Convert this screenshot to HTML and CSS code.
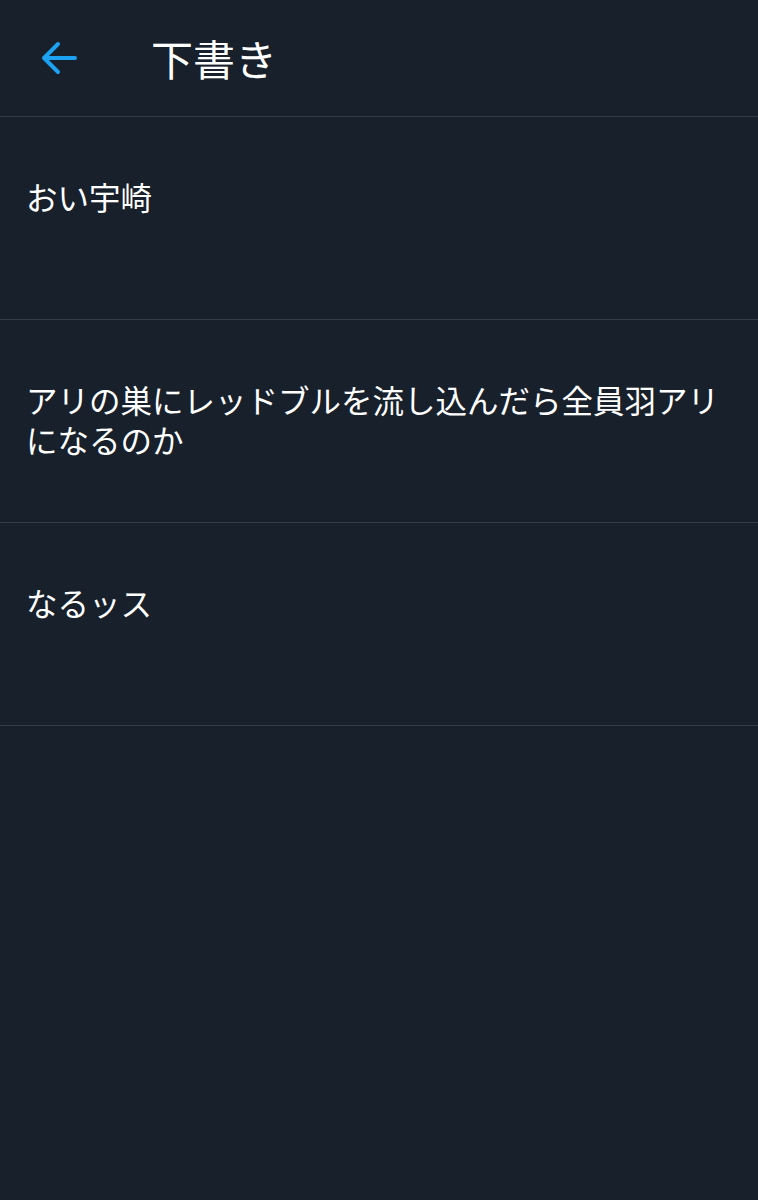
FILE: index.html
```html
<!DOCTYPE html>
<html lang="ja">
<head>
  <meta charset="UTF-8">
  <meta name="viewport" content="width=device-width, initial-scale=1.0">
  <title>下書き</title>
  <link rel="stylesheet" href="styles.css">
</head>
<body>
  <header class="top-bar">
    <span class="back">
      <svg viewBox="0 0 24 24" width="48" height="48">
        <path d="M20 12H4.5M11.5 5l-7 7 7 7" fill="none" stroke="#1da1f2" stroke-width="2" stroke-linecap="round" stroke-linejoin="round"/>
      </svg>
    </span>
    <h1 class="title">下書き</h1>
  </header>

  <ul class="drafts">
    <li class="draft">おい宇崎</li>
    <li class="draft">アリの巣にレッドブルを流し込んだら全員羽アリになるのか</li>
    <li class="draft">なるッス</li>
  </ul>
</body>
</html>
```

FILE: styles.css
```css
body {
  margin: 0;
  padding: 0;
  background-color: #17202b;
  color: #ffffff;
  font-family: "Noto Sans CJK JP", "Noto Sans", sans-serif;
  min-height: 100vh;
}

.top-bar {
  display: flex;
  align-items: center;
  height: 116px;
  padding-left: 35px;
  border-bottom: 1px solid #323d48;
}

.back {
  display: flex;
  width: 48px;
  height: 48px;
}

.title {
  margin: 0 0 0 68px;
  font-size: 42px;
  font-weight: normal;
  line-height: 1;
}

.drafts {
  list-style: none;
  margin: 0;
  padding: 0;
}

.draft {
  box-sizing: border-box;
  height: 203px;
  padding: 59px 26px 0 26px;
  font-size: 31.5px;
  line-height: 40px;
  border-bottom: 1px solid #323d48;
}
```
